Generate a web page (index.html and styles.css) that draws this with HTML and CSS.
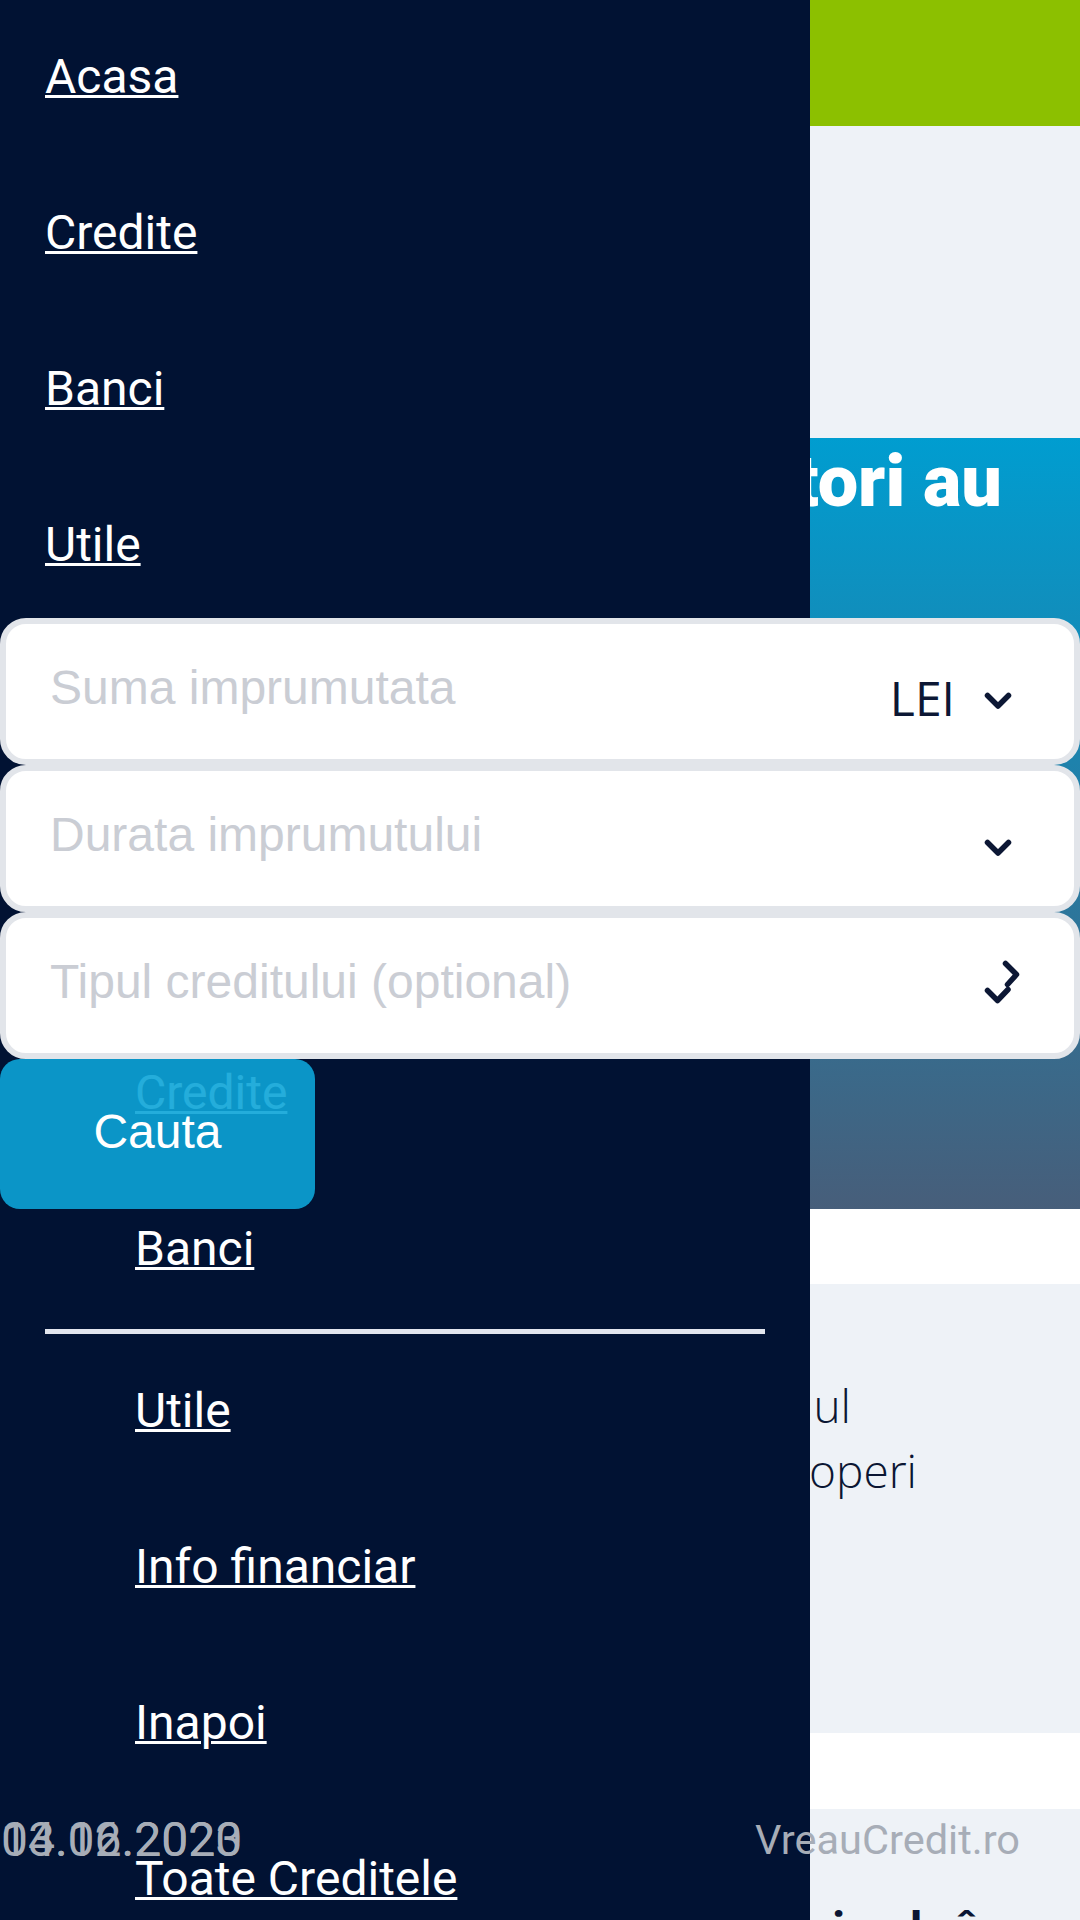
FILE: index.html
```html
<!DOCTYPE html>
<html lang="ro">
<head>
<meta charset="utf-8">
<title>VreauCredit.ro</title>
<link rel="stylesheet" href="styles.css">
</head>
<body>
<div class="page">
  <header class="topbar"></header>
  <section class="intro-band"></section>
  <section class="hero">
    <h1 class="hero-title">Mii de utilizatori au</h1>
  </section>
  <div class="gap"></div>
  <section class="info">
    <p class="info-text">
      <span class="info-line info-line-1">Afla care este nivelul</span>
      <span class="info-line info-line-2">pe care il poti acoperi</span>
    </p>
  </section>
  <div class="gap gap-2"></div>
  <section class="more">
    <h2 class="more-title">Credite pentru mine la început</h2>
  </section>
</div>

<nav class="side-menu">
  <ul class="menu-list">
    <li class="menu-item"><a class="menu-link" href="#">Acasa</a></li>
    <li class="menu-item"><a class="menu-link" href="#">Credite</a></li>
    <li class="menu-item"><a class="menu-link" href="#">Banci</a></li>
    <li class="menu-item"><a class="menu-link" href="#">Utile</a></li>
  </ul>
  <ul class="submenu submenu-top">
    <li class="menu-item"><a class="menu-link" href="#">Credite</a></li>
    <li class="menu-item"><a class="menu-link" href="#">Banci</a></li>
  </ul>
  <hr class="menu-divider">
  <ul class="submenu">
    <li class="menu-item"><a class="menu-link" href="#">Utile</a></li>
    <li class="menu-item"><a class="menu-link" href="#">Info financiar</a></li>
    <li class="menu-item"><a class="menu-link" href="#">Inapoi</a></li>
    <li class="menu-item"><a class="menu-link" href="#">Toate Creditele</a></li>
  </ul>
</nav>

<form class="search-form">
  <div class="field">
    <span class="field-placeholder">Suma imprumutata</span>
    <span class="field-currency">LEI</span>
    <svg class="field-icon" viewBox="0 0 40 54" width="40" height="54" aria-hidden="true">
      <path d="M4.5 33.5 L15 44 L25.5 33.5" fill="none" stroke="#0c1734" stroke-width="5.5" stroke-linecap="round" stroke-linejoin="round"/>
    </svg>
  </div>
  <div class="field">
    <span class="field-placeholder">Durata imprumutului</span>
    <svg class="field-icon" viewBox="0 0 40 54" width="40" height="54" aria-hidden="true">
      <path d="M4.5 33.5 L15 44 L25.5 33.5" fill="none" stroke="#0c1734" stroke-width="5.5" stroke-linecap="round" stroke-linejoin="round"/>
    </svg>
  </div>
  <div class="field">
    <span class="field-placeholder">Tipul creditului (optional)</span>
    <svg class="field-icon" viewBox="0 0 40 54" width="40" height="54" aria-hidden="true">
      <path d="M22.5 7.5 L33.5 18.5 L24.5 28.5" fill="none" stroke="#0c1734" stroke-width="5.5" stroke-linecap="round" stroke-linejoin="round"/>
      <path d="M4.5 34.5 L14.5 44.5 L25 33.5" fill="none" stroke="#0c1734" stroke-width="5.5" stroke-linecap="round" stroke-linejoin="round"/>
    </svg>
  </div>
  <button class="search-btn" type="button">Cauta</button>
</form>

<footer class="footer-bar">
  <div class="dates">
    <span class="date">13.06.2023</span>
    <span class="date date-alt">04.12.2020</span>
  </div>
  <span class="brand">VreauCredit.ro</span>
</footer>
</body>
</html>
```

FILE: styles.css
```css
* {
  box-sizing: border-box;
}

html,
body {
  margin: 0;
  padding: 0;
}

body {
  position: relative;
  width: 1080px;
  height: 1920px;
  overflow: hidden;
  background: #ffffff;
  font-family: Roboto, "Liberation Sans", sans-serif;
}

/* ---------- page behind the menu ---------- */
.page {
  width: 1080px;
}

.topbar {
  height: 126px;
  background: #8cc000;
}

.intro-band {
  height: 312px;
  background: #eef2f7;
}

.hero {
  height: 771px;
  padding: 1px 78px 0 45px;
  background: linear-gradient(180deg, #009dd0 0%, #1e82ac 42%, #475e7a 100%);
}

.hero-title {
  margin: 0;
  font: 900 72px/86px Roboto, sans-serif;
  color: #ffffff;
  text-align: right;
  white-space: nowrap;
}

.gap {
  height: 75px;
  background: #ffffff;
}

.gap-2 {
  height: 76px;
}

.info {
  height: 449px;
  padding-top: 89px;
  background: #eef2f7;
}

.info-text {
  margin: 0;
  font: 300 46px/65px "Open Sans", sans-serif;
  color: #0b1633;
}

.info-line {
  display: block;
  text-align: right;
  white-space: nowrap;
}

.info-line-1 {
  margin-right: 229px;
}

.info-line-2 {
  margin-right: 163px;
}

.more {
  height: 200px;
  padding: 92px 0 0 470px;
  background: #eef2f7;
}

.more-title {
  margin: 0;
  font: 700 48px/57px Roboto, sans-serif;
  color: #0b1633;
  white-space: nowrap;
}

/* ---------- side menu (overlay) ---------- */
.side-menu {
  position: absolute;
  top: 0;
  left: 0;
  z-index: 10;
  width: 810px;
  height: 1920px;
  padding: 0 45px;
  background: #011233;
}

.menu-list,
.submenu {
  list-style: none;
  margin: 0;
  padding: 0;
}

.submenu {
  padding-left: 90px;
}

.submenu-top {
  margin-top: 392px;
}

.menu-item {
  padding: 41px 0 43px;
  font: 400 48px/72px Roboto, sans-serif;
  white-space: nowrap;
}

.menu-link {
  color: #ffffff;
  text-decoration: underline;
  text-decoration-thickness: 3px;
}

.menu-divider {
  height: 5px;
  margin: 1px 0 0;
  border: 0;
  background: #e2e5ee;
}

/* ---------- search form (overlay) ---------- */
.search-form {
  position: absolute;
  top: 618px;
  left: 0;
  z-index: 20;
  width: 1080px;
  margin: 0;
}

.field {
  display: flex;
  align-items: flex-start;
  height: 147px;
  padding: 0 51px 0 44px;
  border: 6px solid #e2e5ea;
  border-radius: 26px;
  background: #ffffff;
}

.field-placeholder {
  flex: 1;
  margin-top: 37px;
  font: 400 48px/54px "Liberation Sans", Arial, sans-serif;
  color: #cacdd4;
  white-space: nowrap;
}

.field-currency {
  margin-top: 50px;
  margin-right: 28px;
  font: 400 48px/48px "Open Sans", sans-serif;
  color: #0c1734;
}

.field-icon {
  display: block;
  flex: none;
  margin-top: 38px;
}

.search-btn {
  display: block;
  width: 315px;
  height: 150px;
  margin: 0;
  padding: 0 0 4px;
  border: 0;
  border-radius: 20px;
  background: rgba(12, 164, 215, 0.9);
  color: #ffffff;
  font: 400 48px/54px "Liberation Sans", Arial, sans-serif;
  cursor: pointer;
}

/* ---------- bottom bar (overlay) ---------- */
.footer-bar {
  position: absolute;
  top: 1816px;
  left: 0;
  z-index: 30;
  display: flex;
  justify-content: space-between;
  align-items: flex-start;
  width: 1080px;
  padding: 0 60px 0 1px;
  color: #a7adb7;
}

.dates {
  position: relative;
  font: 400 48px/48px Roboto, sans-serif;
}

.date-alt {
  position: absolute;
  top: 0;
  left: 0;
}

.brand {
  margin-top: 3px;
  font: 400 41.5px/41.5px Roboto, sans-serif;
}
```
